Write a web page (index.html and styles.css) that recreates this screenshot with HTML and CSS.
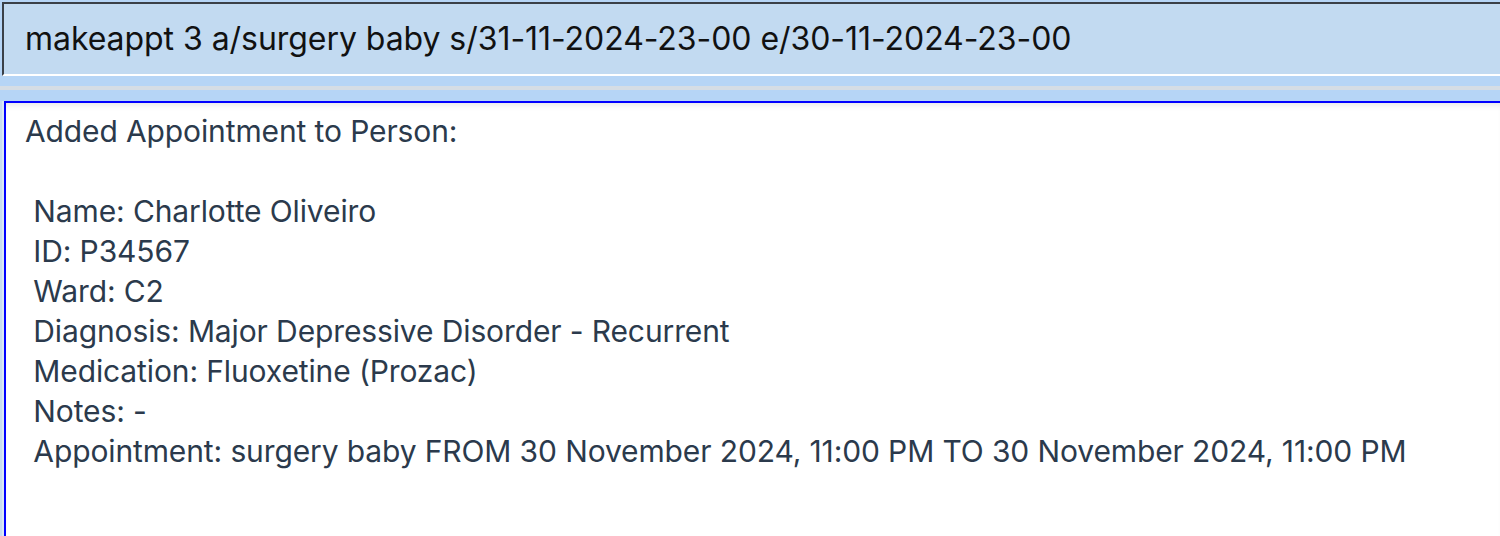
FILE: index.html
```html
<!DOCTYPE html>
<html>
<head>
<meta charset="utf-8">
<link rel="stylesheet" href="styles.css">
</head>
<body>
<div class="app">
  <div class="command-bar">
    <div class="command-input">makeappt 3 a/surgery baby s/31-11-2024-23-00 e/30-11-2024-23-00</div>
  </div>
  <div class="divider"></div>
  <div class="result-wrap">
    <div class="result-box"><div class="result-text">Added Appointment to Person:

 Name: Charlotte Oliveiro
 ID: P34567
 Ward: C2
 Diagnosis: Major Depressive Disorder - Recurrent
 Medication: Fluoxetine (Prozac)
 Notes: -
 Appointment: surgery baby FROM 30 November 2024, 11:00 PM TO 30 November 2024, 11:00 PM</div></div>
  </div>
</div>
</body>
</html>
```

FILE: styles.css
```css
html, body {
  margin: 0;
  padding: 0;
  height: 100%;
  overflow: hidden;
}
body {
  background: #b6d5f6;
  font-family: Inter, "Noto Sans", sans-serif;
}
.app {
  display: flex;
  flex-direction: column;
  height: 536px;
}
.command-bar {
  margin-top: 2px;
  margin-left: 2px;
  border-top: 2px solid #3a4048;
  border-left: 2px solid #3a4048;
  border-bottom: 2px solid #ffffff;
  background: #c2daf1;
  display: flex;
  align-items: center;
  box-sizing: border-box;
  height: 74px;
}
.command-input {
  padding-left: 21px;
  font-size: 32px;
  letter-spacing: -0.05px;
  color: #111111;
  padding-bottom: 2px;
}
.divider {
  margin-top: 10px;
  height: 4px;
  background: #d5dde5;
  margin-bottom: 11px;
}
.result-wrap {
  flex: 1;
  padding-left: 4px;
  background: linear-gradient(to right, #c8dcf0 0, #c8dcf0 2px, #dbe8f5 2px, #dbe8f5 4px);
  display: flex;
}
.result-box {
  flex: 1;
  background: #ffffff;
  border-top: 2px solid #0000ff;
  border-left: 2px solid #0000ff;
  box-shadow: inset 0 6px 6px -4px rgba(0,0,0,0.10);
}
.result-text {
  white-space: pre;
  font-size: 30px;
  letter-spacing: -0.12px;
  line-height: 40px;
  color: #2b3a4c;
  padding-left: 19px;
  padding-top: 8px;
}
```
